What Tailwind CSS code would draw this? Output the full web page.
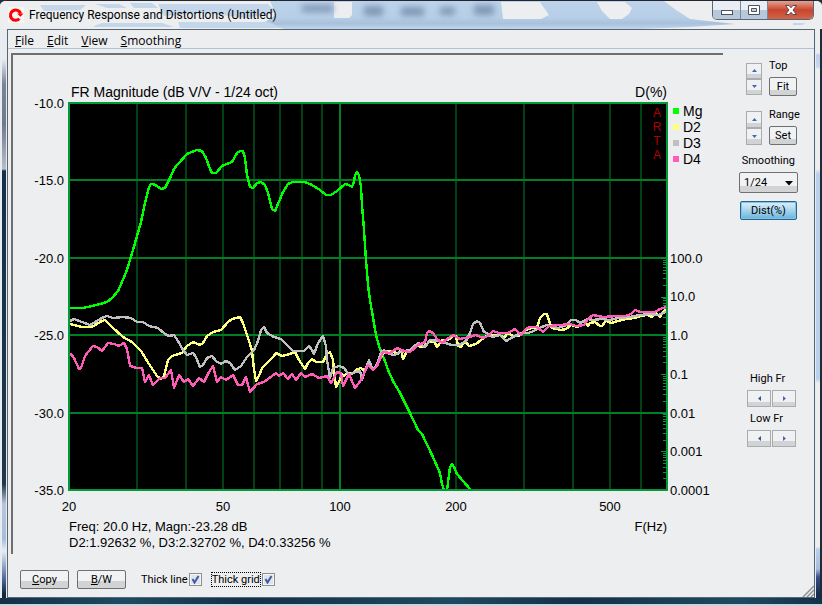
<!DOCTYPE html>
<html lang="en">
<head>
  <meta charset="UTF-8" />
  <meta name="viewport" content="width=device-width, initial-scale=1.0" />
  <title>Frequency Response and Distortions (Untitled)</title>
  <script src="https://cdn.jsdelivr.net/npm/@tailwindcss/browser@4"></script>
</head>
<body class="bg-[#20303c] text-black">
  <div class="min-h-screen flex flex-col rounded-t-md border-t border-[#23252f] bg-[#eceef0] overflow-hidden font-['Open_Sans',sans-serif]">

    <!-- title bar -->
    <header class="relative flex items-start h-7 shrink-0 pl-2">
      <svg class="absolute inset-0 w-full h-full" viewBox="0 0 822 28" preserveAspectRatio="none" aria-hidden="true">
        <defs>
          <linearGradient id="sky" x1="0" y1="0" x2="0" y2="1">
            <stop offset="0" stop-color="#bdd3ec" />
            <stop offset="0.6" stop-color="#b6cee6" />
            <stop offset="0.8" stop-color="#a9c1da" />
            <stop offset="1" stop-color="#bfd5ed" />
          </linearGradient>
          <filter id="soft" x="-20%" y="-40%" width="140%" height="180%"><feGaussianBlur stdDeviation="3" /></filter>
        </defs>
        <rect width="822" height="28" fill="#eceef0" />
        <path d="M270 0H664L676 9L690 18L735 23L690 26L640 28H285L262 23L276 14Z" fill="url(#sky)" />
        <path d="M95 3h24l8 4h-20zM130 2h22l6 5h-24zM158 3h110l8 8-30 6-40-5-42 3zM94 25l8-3h60l12 4h-80zM178 21h90l14 6H180zM8 6h12l4 6-10 8-6-4zM40 4h46l-6 5-36 1z" fill="#c3d6ea" />
        <path d="M334 1h18v13l-3 3h-15zM501 1h39l9 13-8 4h-38zM597 1h28l7 6-3 6-7 5h-12l-8-8z" fill="#eceef0" />
        <g filter="url(#soft)" fill="#8197b5">
          <rect x="302" y="4" width="31" height="7" />
          <rect x="364" y="5" width="19" height="10" />
          <rect x="401" y="6" width="23" height="9" />
          <rect x="440" y="6" width="15" height="8" />
          <rect x="474" y="4" width="20" height="10" />
        </g>
        <path d="M793 22h12l-2 2h-10z" fill="#c3d6ea" />
      </svg>
      <svg class="relative mt-[6px] w-4 h-4 shrink-0" viewBox="0 0 16 16" aria-hidden="true">
        <rect width="16" height="16" fill="#f6f4f4" />
        <path d="M11.400 11.800A5.200 5.200 0 1 1 12.600 6.500" fill="none" stroke="#f00" stroke-width="3" />
        <path d="M9 6.500H15.500L12.500 9.800Z" fill="#f00" />
      </svg>
      <h1 class="relative flex-1 mt-[5px] ml-[5px] text-xs leading-[18px] font-['Roboto',sans-serif]">Frequency Response and Distortions (Untitled)</h1>
      <div class="relative flex mr-2 h-[19px] rounded-b-[5px] border border-t-0 border-[#5b6675] overflow-hidden">
        <button aria-label="Minimize" class="w-7 flex justify-center pt-[9px] border-r border-[#7b8795] bg-linear-to-b from-[#e9eef4] from-50% to-[#b7c8da] to-50%">
          <span class="w-3 h-[5px] border border-[#4c5360] bg-white"></span>
        </button>
        <button aria-label="Maximize" class="w-[27px] flex justify-center pt-1 border-r border-[#7b8795] bg-linear-to-b from-[#e9eef4] from-50% to-[#b7c8da] to-50%">
          <svg width="12" height="10" viewBox="0 0 12 10"><path d="M.5.5h11v9H.5z" fill="#fff" stroke="#4c5360" /><path d="M3.500 3.500h5v3h-5z" fill="#c6d3e0" stroke="#4c5360" /></svg>
        </button>
        <button aria-label="Close" class="w-[45px] flex justify-center pt-1 bg-linear-to-b from-[#e2a193] via-[#c9432c] via-50% to-[#d0664c]">
          <svg width="12" height="10" viewBox="0 0 12 10"><path d="M.5.5h3.600L6 2.700 7.900.5h3.600L8 5l3.500 4.500H7.900L6 7.300 4.100 9.500H.5L4 5z" fill="#fff" stroke="#59474a" /></svg>
        </button>
      </div>
    </header>

    <!-- glass frame around the client area -->
    <div class="flex-1 flex bg-[#16324a]">
      <div class="w-[7px] shrink-0 border-x-2 border-r-1 border-[#e8ecf0] bg-[linear-gradient(#e8ecf2,#e8ecf2_30px,#7a8597_55px,#707a8c_95px,#b9bdc8_140px,#14304a_142px,#20384a_455px,#b8c6dc_475px,#a9bcda_510px,#e6ecf4_522px,#50689c_550px,#10283c_565px)]"></div>

      <div class="relative flex-1 min-w-0 flex flex-col bg-[#edeef0] border border-[#566673]">
        <nav class="flex gap-[13px] h-[19px] pl-[7px] text-xs leading-[21px] border-b border-[#b3bfd2]">
          <a href="#"><u>F</u>ile</a>
          <a href="#"><u>E</u>dit</a>
          <a href="#"><u>V</u>iew</a>
          <a href="#"><u>S</u>moothing</a>
        </nav>

        <div class="flex mt-1 pl-[3px]">
          <main class="flex-1 min-w-0 border-t-2 border-l-2 border-[#6f6f71]">
            <svg class="block w-full h-auto font-['Liberation_Sans',Arial,sans-serif] text-[14px]" viewBox="13 55 710 499" role="img" aria-label="Frequency response and distortion plot">
              <rect x="69" y="103" width="598" height="387" />
              <g fill="none" stroke-width="2" shape-rendering="crispEdges">
                <path d="M137 103V490M186 103V490M223 103V490M254 103V490M280 103V490M302 103V490M322 103V490M456 103V490M524 103V490M573 103V490M610 103V490M641 103V490" stroke="#044015" />
                <path d="M69 180H667M69 258H667M69 335H667M69 413H667M340 103V490" stroke="#008025" />
                <path id="ticks" stroke="#009a38" stroke-width="1" />
              </g>
              <g fill="none" stroke-width="2.400" stroke-linejoin="round" shape-rendering="crispEdges">
                <polyline stroke="#0f0" points="70,308 83,308 92,306 100,304 107,302 112,298 118,291 122,282 127,270 133,250 137,236 141,222 145,203 149,187 151,184 153,184 157,186 161,189 165,188 170,178 174,169 178,164 187,154 192,152 197,150 202,151 206,158 210,169 212,173 216,173 222,166 227,164 232,162 237,153 240,151 243,151 245,158 247,175 250,187 253,188 257,183 261,182 265,185 268,193 272,209 275,211 278,204 283,192 288,184 293,182 305,182 312,185 320,190 326,195 331,195 337,191 345,184 349,185 352,187 354,182 355,175 357,172 359,175 361,187 362,205 364,230 366,260 368,285 370,300 376,335 379,346 385,361 388,370 393,381 400,393 410,413 418,430 422,434 432,455 440,473 442,484 444,490 447,490 449,475 450,467 452,464 454,467 457,474 463,481 470,489" />
                <polyline stroke="#ffff80" points="70,324 82,327 92,327 100,322 105,320 112,327 123,337 132,342 141,351 149,364 157,376 161,379 164,376 168,360 172,356 182,353 187,346 193,342 200,345 203,343 207,336 213,332 221,330 228,322 232,319 240,317 243,323 247,335 250,344 252,351 254,369 256,381 259,376 262,368 268,362 273,357 276,353 282,356 290,354 295,352 299,360 305,369 308,363 312,359 316,362 323,362 327,354 330,352 333,360 336,387 339,382 342,374 344,376 347,373 352,374 356,370 361,368 365,371 369,364 373,370 377,364 384,352 392,351 398,354 401,350 403,359 406,353 411,350 417,346 423,347 429,342 434,341 437,347 442,340 448,340 453,336 456,336 458,346 461,347 465,341 469,346 476,344 481,340 486,336 492,335 500,335 504,338 508,333 513,336 519,336 525,330 532,328 537,328 540,318 544,314 547,314 549,321 552,328 561,330 566,329 571,325 578,327 583,321 585,321 588,326 590,323 595,322 600,326 602,326 606,321 611,323 618,321 626,319 634,318 641,316 647,315 652,317 656,313 660,317 664,311 666,310" />
                <polyline stroke="#c0c0c0" points="70,321 74,319 82,322 90,325 97,321 102,318 107,316 113,318 123,317 131,318 137,322 143,322 149,326 158,328 165,334 169,336 174,335 178,341 183,350 187,355 193,353 196,357 200,367 203,365 207,358 212,356 216,361 221,364 226,361 230,363 235,370 241,366 247,357 254,350 258,341 261,330 264,327 267,333 274,337 281,339 287,345 293,351 304,351 309,346 312,350 314,354 318,343 323,336 326,346 327,360 330,378 333,368 339,366 344,368 349,375 355,372 360,371 362,380 364,373 369,360 373,370 377,364 381,352 384,350 389,354 395,355 400,352 410,350 418,343 425,347 430,340 438,341 445,343 452,345 459,345 466,341 470,333 473,324 477,321 480,323 484,332 487,333 492,337 500,335 506,341 513,337 521,333 528,333 534,331 539,328 547,325 550,326 558,328 567,325 571,320 576,320 580,323 588,319 593,320 601,319 610,320 618,318 630,317 640,315 650,314 658,315 666,312" />
                <polyline stroke="#ff5cb8" points="70,353 74,358 79,369 81,368 85,356 93,346 97,347 102,351 108,343 114,344 119,346 124,343 127,349 130,366 137,368 142,368 145,382 149,375 153,385 160,378 165,378 171,370 174,388 179,375 184,382 188,379 193,386 199,378 204,382 209,372 213,366 217,382 221,377 226,380 233,375 238,385 242,385 246,377 250,392 257,384 264,382 272,376 276,373 279,376 283,373 288,379 292,374 296,380 301,373 305,377 312,374 319,378 327,376 331,383 337,372 341,373 343,386 349,374 355,388 361,380 368,365 373,370 377,366 383,352 390,353 397,348 404,351 410,352 418,345 425,342 427,333 429,331 433,333 437,339 442,343 447,339 453,335 460,339 469,337 476,335 483,338 488,336 493,331 499,333 508,333 515,329 521,335 527,328 531,327 537,327 543,332 549,326 560,325 570,324 576,326 584,325 588,319 593,315 603,317 617,316 625,316 631,314 635,310 640,312 650,312 655,312 660,309 666,307" />
              </g>
              <rect x="69" y="103" width="598" height="387" fill="none" stroke="#009a38" stroke-width="2" shape-rendering="crispEdges" />

              <text x="71" y="97">FR Magnitude (dB V/V - 1/24 oct)</text>
              <text x="667" y="97" text-anchor="end">D(%)</text>
              <g text-anchor="end" class="text-[13px]">
                <text x="64" y="108">-10.0</text>
                <text x="64" y="185">-15.0</text>
                <text x="64" y="263">-20.0</text>
                <text x="64" y="340">-25.0</text>
                <text x="64" y="418">-30.0</text>
                <text x="64" y="495">-35.0</text>
              </g>
              <g class="text-[13px]">
                <text x="670" y="263">100.0</text>
                <text x="670" y="301">10.0</text>
                <text x="670" y="340">1.0</text>
                <text x="670" y="379">0.1</text>
                <text x="670" y="418">0.01</text>
                <text x="670" y="456">0.001</text>
                <text x="670" y="495">0.0001</text>
              </g>
              <g text-anchor="middle" class="text-[13px]">
                <text x="69" y="511">20</text>
                <text x="223" y="511">50</text>
                <text x="340" y="511">100</text>
                <text x="456" y="511">200</text>
                <text x="610" y="511">500</text>
              </g>
              <g class="text-[13px]">
                <text x="69" y="531">Freq: 20.0 Hz, Magn:-23.28 dB</text>
                <text x="69" y="547">D2:1.92632 %, D3:2.32702 %, D4:0.33256 %</text>
                <text x="667" y="531" text-anchor="end">F(Hz)</text>
              </g>
              <g text-anchor="middle" fill="#b00000" class="text-[12px]">
                <text x="657" y="117">A</text>
                <text x="657" y="131">R</text>
                <text x="657" y="145">T</text>
                <text x="657" y="159">A</text>
              </g>
              <rect x="673" y="108" width="6" height="6" fill="#0f0" />
              <rect x="673" y="124" width="6" height="6" fill="#ffff80" />
              <rect x="673" y="140" width="6" height="6" fill="#c0c0c0" />
              <rect x="673" y="156" width="6" height="6" fill="#ff5cb8" />
              <text x="683" y="116">Mg</text>
              <text x="683" y="132">D2</text>
              <text x="683" y="148">D3</text>
              <text x="683" y="164">D4</text>
            </svg>
          </main>

          <aside class="w-[91px] shrink-0 flex flex-col items-end pt-[9px] pr-4 text-[11px] leading-4 font-['Roboto',sans-serif]">
            <div class="flex gap-[7px] items-start mr-px">
              <div class="flex flex-col pt-px">
                <button aria-label="Top up" class="w-4 h-4 flex justify-center pt-[5px] border border-[#a9abb1] bg-linear-to-b from-[#f0f1f2] from-70% to-[#d2d3d4] to-70%"><svg width="5" height="3"><path d="M0 3L2.500 0L5 3z" fill="#4a66b0" /></svg></button>
                <button aria-label="Top down" class="w-4 h-4 flex justify-center pt-[5px] border border-[#a9abb1] bg-linear-to-b from-[#f0f1f2] from-70% to-[#d2d3d4] to-70%"><svg width="5" height="3"><path d="M0 0L2.500 3L5 0z" fill="#4a66b0" /></svg></button>
              </div>
              <div class="w-7">
                <div class="-mt-1">Top</div>
                <button class="mt-[3px] w-7 h-[19px] rounded-xs border border-[#707070] bg-linear-to-b from-[#f1f2f3] from-70% to-[#d2d3d4] to-70%">Fit</button>
              </div>
            </div>
            <div class="flex gap-[7px] items-start mt-[15px] mr-px">
              <div class="flex flex-col">
                <button aria-label="Range up" class="w-4 h-[17px] flex justify-center pt-[6px] border border-[#a9abb1] bg-linear-to-b from-[#f0f1f2] from-70% to-[#d2d3d4] to-70%"><svg width="5" height="3"><path d="M0 3L2.500 0L5 3z" fill="#4a66b0" /></svg></button>
                <button aria-label="Range down" class="w-4 h-[17px] flex justify-center pt-[6px] border border-[#a9abb1] bg-linear-to-b from-[#f0f1f2] from-70% to-[#d2d3d4] to-70%"><svg width="5" height="3"><path d="M0 0L2.500 3L5 0z" fill="#4a66b0" /></svg></button>
              </div>
              <div class="w-7">
                <div class="-mt-1">Range</div>
                <button class="mt-[3px] w-7 h-[19px] rounded-xs border border-[#707070] bg-linear-to-b from-[#f1f2f3] from-70% to-[#d2d3d4] to-70%">Set</button>
              </div>
            </div>
            <label for="smoothing" class="mt-2 mr-[3px]">Smoothing</label>
            <div class="relative mt-[3px]">
              <select id="smoothing" class="block appearance-none w-[59px] h-[21px] pl-1 rounded-xs border border-[#707070] bg-linear-to-b from-[#f1f2f3] from-70% to-[#d2d3d4] to-70%">
                <option>1/24</option>
              </select>
              <svg class="absolute right-[5px] top-[9px] pointer-events-none" width="8" height="5"><path d="M0 0h8L4 4.500z" /></svg>
            </div>
            <button class="mt-2 mr-px w-[57px] h-[19px] rounded-xs border border-[#2c628b] bg-linear-to-b from-[#e0f0fa] via-[#a5d4ee] via-50% to-[#68b3db] shadow-[inset_0_0_0_1px_#7cc4e8]">Dist(%)</button>

            <div class="mt-[151px] mr-0.5 w-[49px] pl-[3px]">High Fr</div>
            <div class="flex gap-px mt-[3px] mr-0.5">
              <button aria-label="High Fr down" class="w-6 h-[17px] flex justify-center pt-[5px] border border-[#a9abb1] bg-linear-to-b from-[#f0f1f2] from-70% to-[#d2d3d4] to-70%"><svg width="3" height="5"><path d="M3 0L0 2.500L3 5z" fill="#3a5090" /></svg></button>
              <button aria-label="High Fr up" class="w-6 h-[17px] flex justify-center pt-[5px] border border-[#a9abb1] bg-linear-to-b from-[#f0f1f2] from-70% to-[#d2d3d4] to-70%"><svg width="3" height="5"><path d="M0 0L3 2.500L0 5z" fill="#4a66b0" /></svg></button>
            </div>
            <div class="mt-1 mr-0.5 w-[49px] pl-[3px]">Low Fr</div>
            <div class="flex gap-px mt-[3px] mr-0.5">
              <button aria-label="Low Fr down" class="w-6 h-[17px] flex justify-center pt-[5px] border border-[#a9abb1] bg-linear-to-b from-[#f0f1f2] from-70% to-[#d2d3d4] to-70%"><svg width="3" height="5"><path d="M3 0L0 2.500L3 5z" fill="#3a5090" /></svg></button>
              <button aria-label="Low Fr up" class="w-6 h-[17px] flex justify-center pt-[5px] border border-[#a9abb1] bg-linear-to-b from-[#f0f1f2] from-70% to-[#d2d3d4] to-70%"><svg width="3" height="5"><path d="M0 0L3 2.500L0 5z" fill="#4a66b0" /></svg></button>
            </div>
          </aside>
        </div>

        <footer class="flex items-center gap-2 pt-4 pb-2 pl-3 text-[11px] leading-4 font-['Roboto',sans-serif]">
          <button class="w-[49px] h-[19px] rounded-xs border border-[#707070] bg-linear-to-b from-[#f1f2f3] from-60% to-[#d2d3d4] to-60%"><u>C</u>opy</button>
          <button class="w-[49px] h-[19px] rounded-xs border border-[#707070] bg-linear-to-b from-[#f1f2f3] from-60% to-[#d2d3d4] to-60%"><u>B</u>/W</button>
          <label class="flex items-center gap-px ml-[7px]">Thick line
            <span class="relative flex">
              <input type="checkbox" checked class="appearance-none w-[13px] h-[13px] border border-[#8e8f8f] bg-[#dfe3ec] shadow-[inset_0_0_0_1px_#f4f4f4]" />
              <svg class="absolute inset-0 pointer-events-none" width="13" height="13" viewBox="0 0 13 13"><path d="M3.500 6L5.500 9.500L9.500 3" fill="none" stroke="#3f5aa3" stroke-width="2" /></svg>
            </span>
          </label>
          <label class="flex items-center gap-px ml-px"><span class="border border-dotted border-black leading-[13px]">Thick grid</span>
            <span class="relative flex">
              <input type="checkbox" checked class="appearance-none w-[13px] h-[13px] border border-[#8e8f8f] bg-[#dfe3ec] shadow-[inset_0_0_0_1px_#f4f4f4]" />
              <svg class="absolute inset-0 pointer-events-none" width="13" height="13" viewBox="0 0 13 13"><path d="M3.500 6L5.500 9.500L9.500 3" fill="none" stroke="#3f5aa3" stroke-width="2" /></svg>
            </span>
          </label>
        </footer>

        <svg class="absolute right-0 bottom-0" width="12" height="12" aria-hidden="true"><path d="M1 12L12 1M5 12L12 5M9 12L12 9" stroke="#909294" stroke-width="1.500" /></svg>
      </div>

      <div class="w-[7px] shrink-0 border-l-1 border-r-2 border-l-[#e8ecf0] border-r-[#1c2c38] bg-[linear-gradient(#eceef0,#eceef0_24px,#bcd0ea_26px,#c8d8ec_38px,#eceef0_40px,#eceef0_140px,#b9d0ea_145px,#b9d0ea_350px,#eceef0_354px,#eceef0_518px,#b9d0ea_520px,#a9bcda_540px,#3c4f8c_548px,#14304a_565px)]"></div>
    </div>
    <div class="h-2 shrink-0 border-b-2 border-[#c8d4dc] bg-[linear-gradient(90deg,#14304a,#1d4a62_15%,#14304a_30%,#1d4a62_55%,#14304a_70%,#1d4a62_90%,#14304a)]"></div>
  </div>

  <script>
    // log scale ticks for the distortion axis, six decades from 100% down to 0.0001%
    const top0 = 258, decade = 232 / 6;
    let d = '';
    for (let i = 0; i < 6; i++) {
      const base = top0 + (i + 1) * decade;
      d += `M661 ${Math.round(base - decade)}.5H667`;
      for (let n = 2; n < 10; n++) {
        d += `M663 ${Math.round(base - decade * Math.log10(n))}.5H667`;
      }
    }
    document.getElementById('ticks').setAttribute('d', d);
  </script>
</body>
</html>
